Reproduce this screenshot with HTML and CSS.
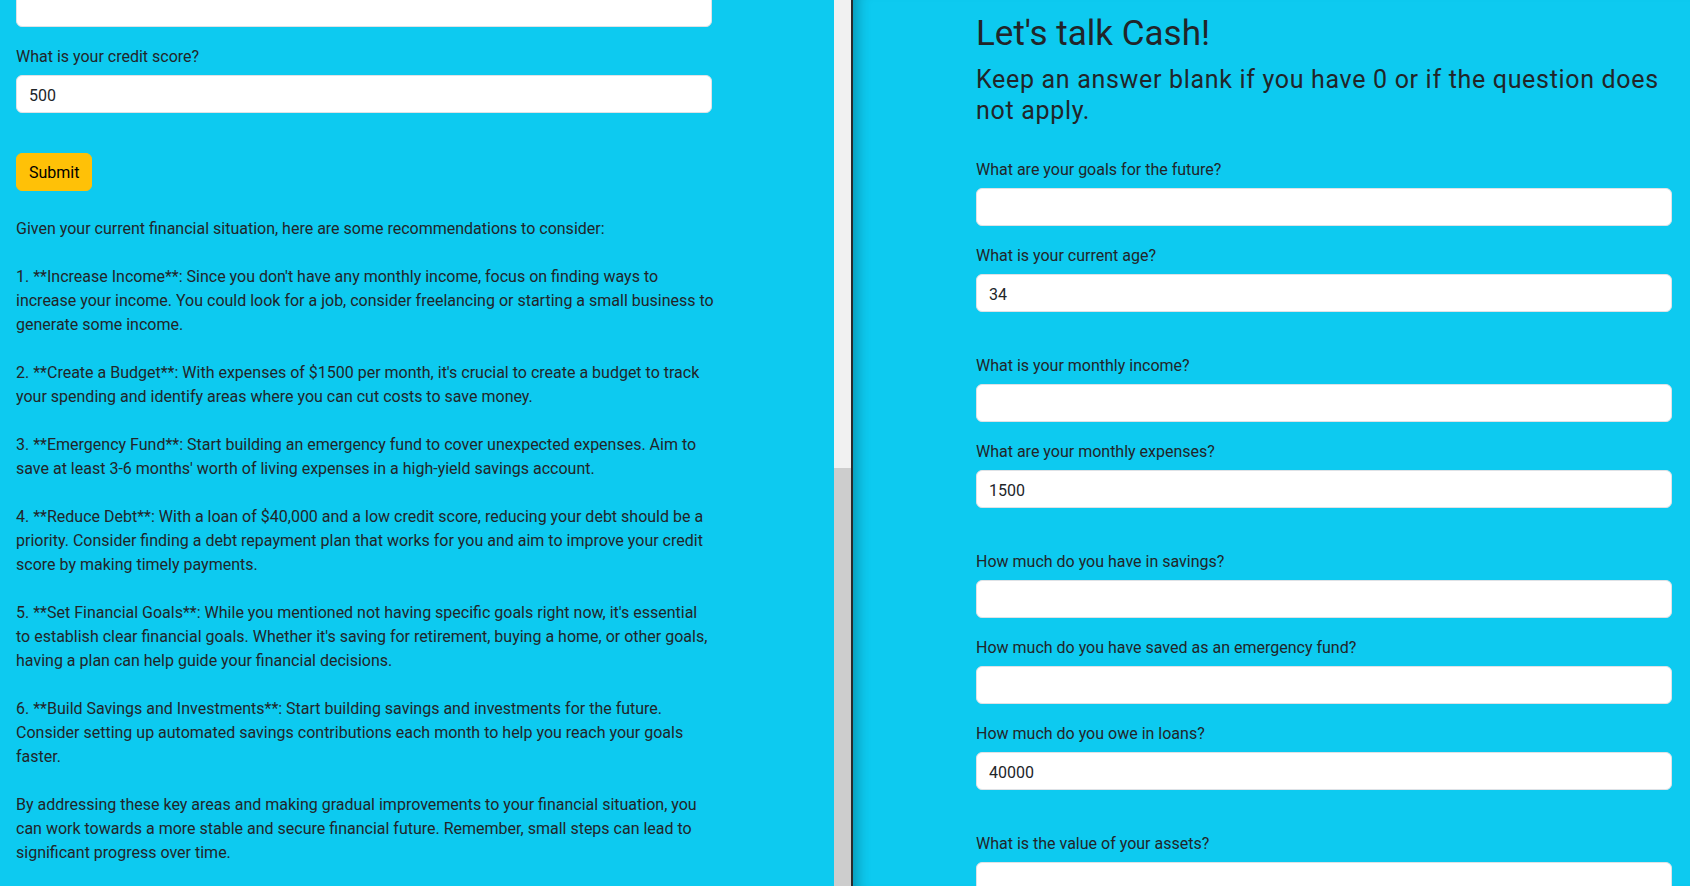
FILE: index.html
```html
<!DOCTYPE html>
<html lang="en">
<head>
<meta charset="utf-8">
<title>Let's talk Cash!</title>
<link rel="stylesheet" href="styles.css">
</head>
<body>
<div class="split">
  <section class="pane pane-left">
    <div class="page page-left">
      <form class="form">
        <div class="field"><input class="input" type="text" value="" aria-label="What is the value of your assets?"></div>
        <div class="field"><label class="label">What is your credit score?</label><input class="input" type="text" value="500"></div>
        <br>
        <button class="btn" type="button">Submit</button>
      </form>
      <div class="advice">
        <p>Given your current financial situation, here are some recommendations to consider:</p>
        <p>1. **Increase Income**: Since you don't have any monthly income, focus on finding ways to<br>increase your income. You could look for a job, consider freelancing or starting a small business to<br>generate some income.</p>
        <p>2. **Create a Budget**: With expenses of $1500 per month, it's crucial to create a budget to track<br>your spending and identify areas where you can cut costs to save money.</p>
        <p>3. **Emergency Fund**: Start building an emergency fund to cover unexpected expenses. Aim to<br>save at least 3-6 months' worth of living expenses in a high-yield savings account.</p>
        <p>4. **Reduce Debt**: With a loan of $40,000 and a low credit score, reducing your debt should be a<br>priority. Consider finding a debt repayment plan that works for you and aim to improve your credit<br>score by making timely payments.</p>
        <p>5. **Set Financial Goals**: While you mentioned not having specific goals right now, it's essential<br>to establish clear financial goals. Whether it's saving for retirement, buying a home, or other goals,<br>having a plan can help guide your financial decisions.</p>
        <p>6. **Build Savings and Investments**: Start building savings and investments for the future.<br>Consider setting up automated savings contributions each month to help you reach your goals<br>faster.</p>
        <p>By addressing these key areas and making gradual improvements to your financial situation, you<br>can work towards a more stable and secure financial future. Remember, small steps can lead to<br>significant progress over time.</p>
      </div>
    </div>
  </section>
  <div class="scrollbar"><div class="scrollbar-thumb"></div></div>
  <div class="divider"></div>
  <section class="pane pane-right">
    <div class="page page-right">
      <h1 class="title">Let's talk Cash!</h1>
      <h2 class="subtitle">Keep an answer blank if you have 0 or if the question does not apply.</h2>
      <form class="form">
        <div class="field"><label class="label">What are your goals for the future?</label><input class="input" type="text" value=""></div>
        <div class="field"><label class="label">What is your current age?</label><input class="input" type="text" value="34"></div>
        <br>
        <div class="field"><label class="label">What is your monthly income?</label><input class="input" type="text" value=""></div>
        <div class="field"><label class="label">What are your monthly expenses?</label><input class="input" type="text" value="1500"></div>
        <br>
        <div class="field"><label class="label">How much do you have in savings?</label><input class="input" type="text" value=""></div>
        <div class="field"><label class="label">How much do you have saved as an emergency fund?</label><input class="input" type="text" value=""></div>
        <div class="field"><label class="label">How much do you owe in loans?</label><input class="input" type="text" value="40000"></div>
        <br>
        <div class="field"><label class="label">What is the value of your assets?</label><input class="input" type="text" value=""></div>
      </form>
    </div>
  </section>
</div>
</body>
</html>
```
FILE: styles.css
```css
* { box-sizing: border-box; }
html, body { margin: 0; height: 100%; }
body {
  font-family: Roboto, "Liberation Sans", sans-serif;
  font-size: 16px;
  line-height: 1.5;
  color: #212529;
  background: #0dcaf0;
  overflow: hidden;
}
.split { display: flex; height: 100vh; }
.pane { background: #0dcaf0; }
.pane-left {
  width: 834px;
  flex: none;
  overflow: hidden;
  display: flex;
  flex-direction: column-reverse;
}
.scrollbar {
  width: 17px;
  flex: none;
  display: flex;
  flex-direction: column;
  background: #f1f1f1;
}
.scrollbar-thumb {
  margin-top: 468px;
  flex: 1;
  background: #cdcdcd;
}
.divider { width: 2px; flex: none; background: #2b2b2b; }
.pane-right {
  flex: 1;
  overflow: hidden;
  box-shadow: inset 16px 0 14px -12px rgba(0, 0, 0, 0.28);
}
.page-left { padding: 0 16px 6px; }
.page-right { padding: 13px 0 0 123px; }
.title, .subtitle, .form, .advice { width: 696px; }
.title { font-size: 35px; line-height: 42px; font-weight: 400; margin: 0 0 9px; }
.subtitle {
  font-size: 25px;
  line-height: 31px;
  font-weight: 400;
  letter-spacing: 0.68px;
  margin: 0 0 30px;
}
.form { margin: 0; }
.field { margin-bottom: 16px; }
.label { display: block; padding-top: 2px; margin-bottom: 6px; }
.input {
  display: block;
  width: 100%;
  height: 38px;
  padding: 7px 12px 5px;
  font: inherit;
  color: #212529;
  background: #fff;
  border: 1px solid #dee2e6;
  border-radius: 6px;
}
.btn {
  display: inline-block;
  height: 38px;
  padding: 7px 12px 5px;
  font: inherit;
  color: #000;
  background: #ffc107;
  border: 1px solid #ffc107;
  border-radius: 6px;
  vertical-align: top;
}
.advice { margin-top: 26px; }
.advice p { margin: 0 0 24px; white-space: nowrap; }
.advice p:last-child { margin-bottom: 15px; }
```
